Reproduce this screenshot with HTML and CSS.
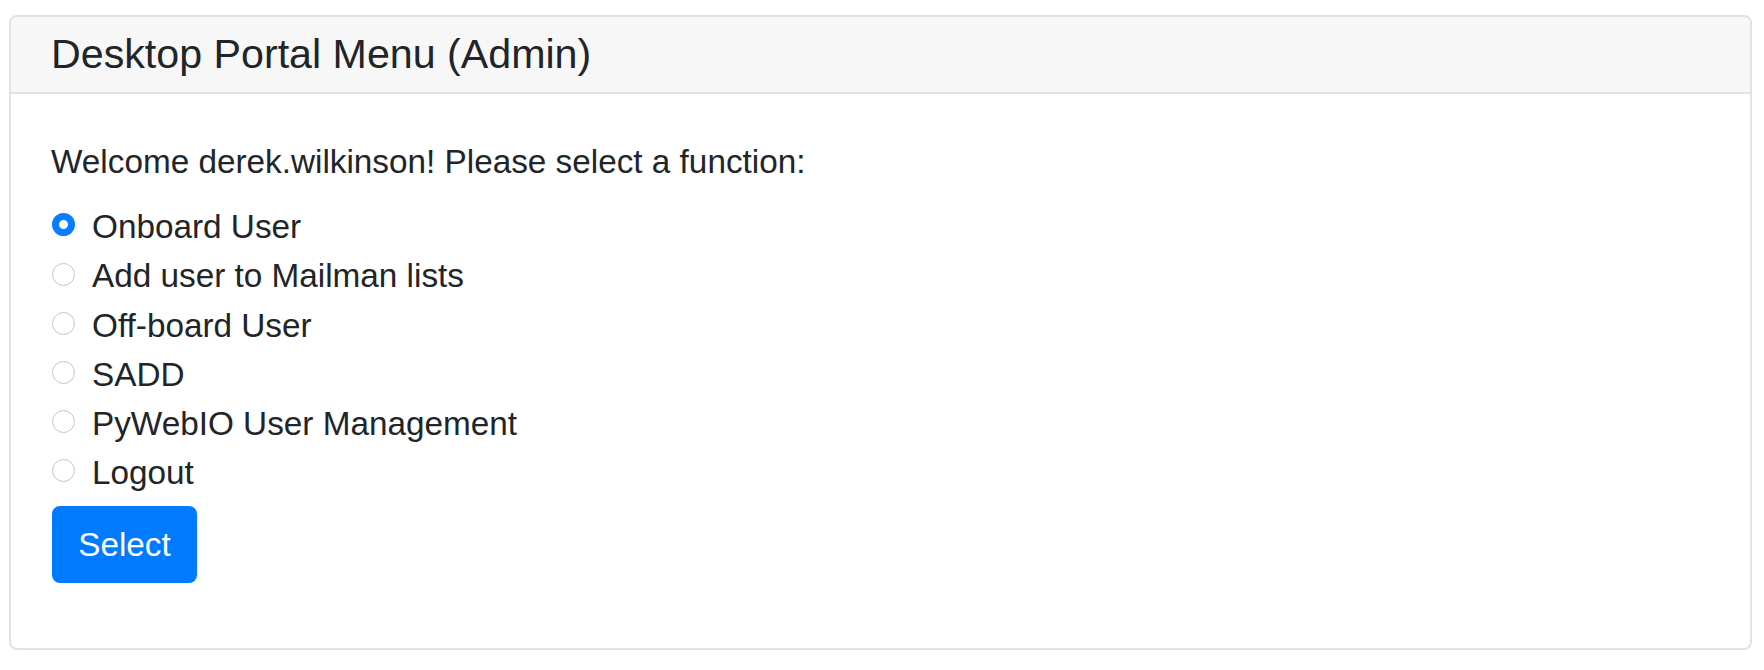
FILE: index.html
```html
<!DOCTYPE html>
<html>
<head>
<meta charset="utf-8">
<link rel="stylesheet" href="styles.css">
</head>
<body>
<div class="card">
  <div class="card-header"><h5 class="card-title">Desktop Portal Menu (Admin)</h5></div>
  <div class="card-body">
    <p class="welcome">Welcome derek.wilkinson! Please select a function:</p>
    <div class="options">
      <label class="opt"><span class="radio checked"></span><span>Onboard User</span></label>
      <label class="opt"><span class="radio"></span><span>Add user to Mailman lists</span></label>
      <label class="opt"><span class="radio"></span><span>Off-board User</span></label>
      <label class="opt"><span class="radio"></span><span>SADD</span></label>
      <label class="opt"><span class="radio"></span><span>PyWebIO User Management</span></label>
      <label class="opt"><span class="radio"></span><span>Logout</span></label>
    </div>
    <button class="btn">Select</button>
  </div>
</div>
</body>
</html>
```
FILE: styles.css
```css
html, body {
  margin: 0;
  padding: 0;
  background: #ffffff;
}
body {
  padding: 15px 12px 0 9px;
  font-family: "Liberation Sans", Arial, Helvetica, sans-serif;
  color: #212529;
}
.card {
  border: 2px solid #e2e2e2;
  border-radius: 8px;
  overflow: hidden;
  height: 635px;
  box-sizing: border-box;
}
.card-header {
  background: #f7f7f7;
  border-bottom: 2px solid #e2e2e2;
  padding: 13px 40px 13px;
}
.card-title {
  margin: 0;
  font-size: 41.2px;
  font-weight: 400;
  line-height: 49px;
}
.card-body {
  padding: 43px 40px;
}
.welcome {
  margin: 0 0 16px;
  font-size: 33.3px;
  line-height: 49.2px;
}
.options {
  display: flex;
  flex-direction: column;
}
.opt {
  display: flex;
  align-items: center;
  gap: 17px;
  font-size: 33.3px;
  line-height: 49.2px;
  padding-left: 1px;
}
.radio {
  width: 23px;
  height: 23px;
  box-sizing: border-box;
  border-radius: 50%;
  border: 1.5px solid #c4c4c4;
  background: #fff;
  flex: none;
  margin-top: -4px;
}
.radio.checked {
  border: 7.5px solid #0a7cff;
  background: #fff;
}
.btn {
  margin-top: 9px;
  margin-left: 1px;
  background: #007bff;
  color: #fff;
  border: none;
  border-radius: 8px;
  font-family: "Liberation Sans", Arial, Helvetica, sans-serif;
  font-size: 33.3px;
  line-height: 49.2px;
  padding: 14px 22px;
  width: 145px;
  height: 77px;
}
```
